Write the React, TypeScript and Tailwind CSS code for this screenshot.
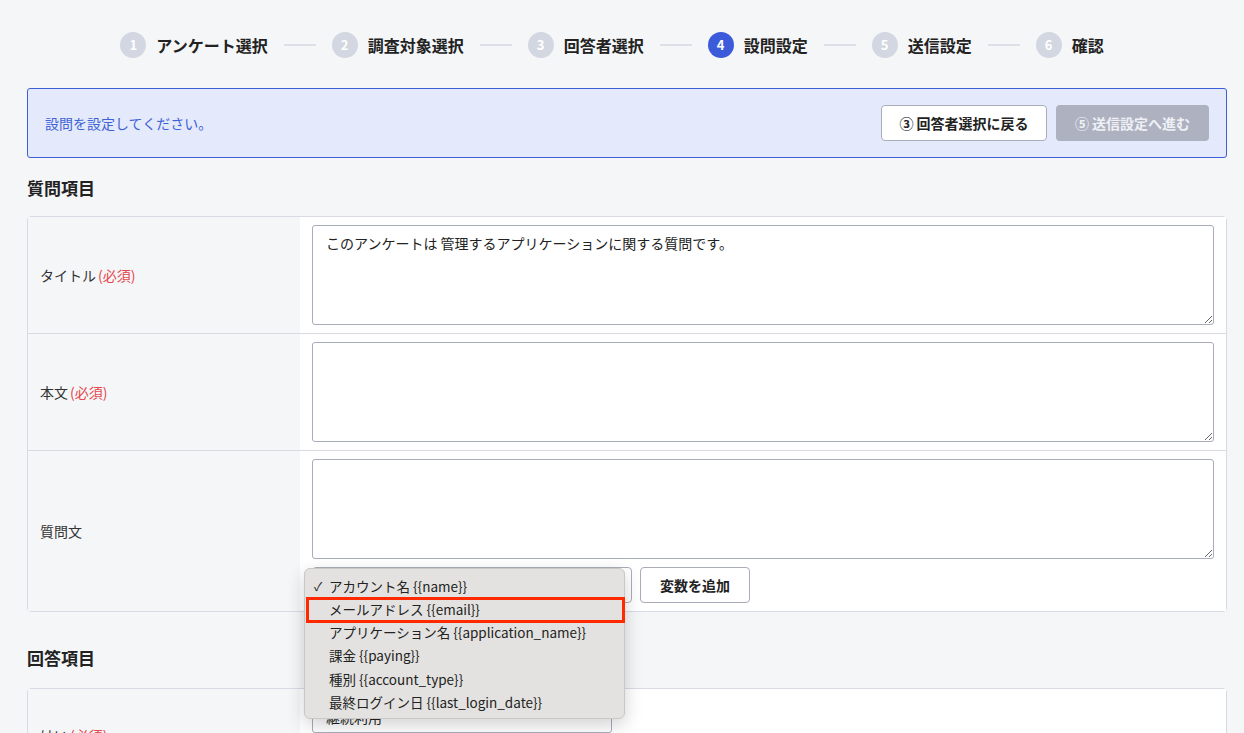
import type { ReactNode } from "react";

const steps = [
  { no: 1, label: "アンケート選択" },
  { no: 2, label: "調査対象選択" },
  { no: 3, label: "回答者選択" },
  { no: 4, label: "設問設定" },
  { no: 5, label: "送信設定" },
  { no: 6, label: "確認" },
];

const variables = [
  "アカウント名 {{name}}",
  "メールアドレス {{email}}",
  "アプリケーション名 {{application_name}}",
  "課金 {{paying}}",
  "種別 {{account_type}}",
  "最終ログイン日 {{last_login_date}}",
];

function Stepper({ current }: { current: number }) {
  return (
    <div className="flex items-center justify-center pr-[30px]">
      {steps.map((step, index) => (
        <div key={step.no} className="flex items-center">
          {index > 0 && <div className="mx-4 h-[2px] w-8 bg-[#dde0e8]" />}
          <div
            className={
              step.no === current
                ? "flex h-[26px] w-[26px] items-center justify-center rounded-full bg-[#3b5bdb] text-[13px] font-bold text-white"
                : "flex h-[26px] w-[26px] items-center justify-center rounded-full bg-[#d3d7e1] text-[13px] font-bold text-white"
            }
          >
            {step.no}
          </div>
          <span className="ml-[10px] text-[16px] font-bold text-[#222]">{step.label}</span>
        </div>
      ))}
    </div>
  );
}

function Required() {
  return <span className="ml-[2px] text-[#e5484d]">(必須)</span>;
}

function Row({ label, children, last }: { label: ReactNode; children: ReactNode; last?: boolean }) {
  return (
    <div className={last ? "flex" : "flex border-b border-[#d8dbe3]"}>
      <div className="flex w-[272px] shrink-0 items-center bg-[#f5f6f8] pl-3 text-[14px] text-[#333]">{label}</div>
      <div className="flex-1 bg-white px-3 py-2">{children}</div>
    </div>
  );
}

function Area({ value }: { value?: string }) {
  return (
    <textarea
      readOnly
      defaultValue={value}
      className="block h-[100px] w-full rounded-[3px] border border-[#a9acba] px-[13px] py-[7px] text-[14px] leading-5 text-[#222] outline-none"
    />
  );
}

function VariableMenu() {
  return (
    <div className="absolute left-[-8px] top-[1px] z-10 w-[321px] rounded-[6px] border border-[#c9c8c6] bg-[#e3e2e0] pb-[4px] pt-[5px] shadow-[0_6px_18px_rgba(0,0,0,0.18)]">
      {variables.map((item, index) => (
        <div key={item} className="relative flex h-[23.3px] items-center pl-[24px] text-[13.5px] text-[#222]">
          {index === 0 && <span className="absolute left-[9px] text-[12px]">✓</span>}
          {item}
        </div>
      ))}
      <div className="pointer-events-none absolute left-[1px] top-[28px] h-[26px] w-[319px] border-[3px] border-[#ff2a00]" />
    </div>
  );
}

export default function App() {
  return (
    <div
      className="h-[733px] overflow-hidden bg-[#f5f6f8] pl-[27px] pr-[17px] pt-8 text-[#222]"
      style={{ fontFamily: '"Noto Sans CJK JP", "Noto Sans", sans-serif' }}
    >
      <Stepper current={4} />

      <div className="mt-[30px] flex h-[70px] items-center justify-between rounded-[3px] border border-[#3c5fd6] bg-[#e4e9fb] pl-[17px] pr-[17px]">
        <span className="text-[14px] text-[#3d63d6]">設問を設定してください。</span>
        <div className="flex gap-[9px]">
          <button className="h-9 w-[166px] rounded-[4px] border border-[#a9acb9] bg-white text-[14px] font-bold text-[#222]">
            ③ 回答者選択に戻る
          </button>
          <button className="h-9 w-[153px] rounded-[4px] bg-[#adb1c0] text-[14px] font-bold text-[#eef0f5]">
            ⑤ 送信設定へ進む
          </button>
        </div>
      </div>

      <h2 className="mt-[18px] text-[17px] font-bold leading-6">質問項目</h2>

      <div className="mt-4 rounded-[4px] border border-[#d8dbe3]">
        <Row label={<>タイトル<Required /></>}>
          <Area value="このアンケートは 管理するアプリケーションに関する質問です。" />
        </Row>
        <Row label={<>本文<Required /></>}>
          <Area />
        </Row>
        <Row label="質問文" last>
          <Area />
          <div className="mt-2 flex gap-2">
            <div className="relative">
              <div className="h-9 w-[320px] rounded-[4px] border border-[#a9acba] bg-white" />
              <VariableMenu />
            </div>
            <button className="h-9 w-[110px] rounded-[4px] border border-[#a9acb9] bg-white text-[14px] font-bold text-[#222]">
              変数を追加
            </button>
          </div>
        </Row>
      </div>

      <h2 className="mt-[34px] text-[17px] font-bold leading-6">回答項目</h2>

      <div className="mt-[18px] rounded-[4px] border border-[#d8dbe3]">
        <Row label={<>はい<Required /></>} last>
          <div className="pt-[4px]">
            <div className="flex h-8 w-[300px] items-center rounded-[3px] border border-[#a9acba] px-[13px] text-[14px]">継続利用</div>
            <div className="mt-2 h-8 w-[300px] rounded-[3px] border border-[#a9acba]" />
          </div>
        </Row>
      </div>
    </div>
  );
}
